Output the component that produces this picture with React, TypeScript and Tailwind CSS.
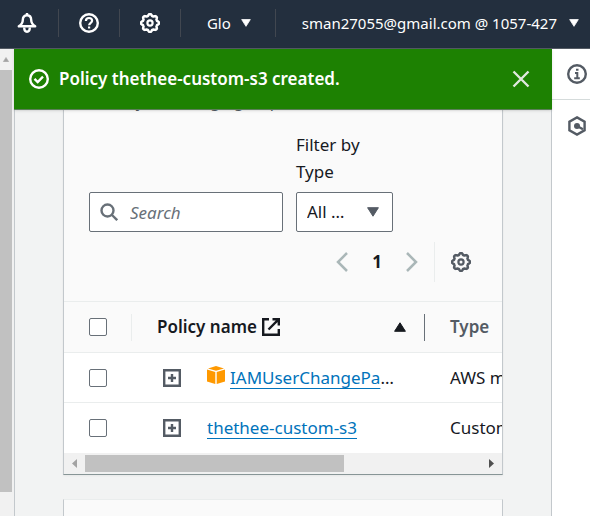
import React from "react";

const gearPoints = (r1: number, r2: number) => {
  const n = 64;
  const pts: string[] = [];
  for (let i = 0; i < n; i++) {
    const a = (i / n) * Math.PI * 2;
    const w = Math.max(-1, Math.min(1, Math.cos(a * 8) * 1.6));
    const r = (r1 + r2) / 2 + ((r2 - r1) / 2) * w;
    pts.push(`${(10 + r * Math.cos(a)).toFixed(2)},${(10 + r * Math.sin(a)).toFixed(2)}`);
  }
  return pts.join(" ");
};

function Gear() {
  return (
    <svg viewBox="0 0 20 20" className="size-5" fill="none" stroke="currentColor" strokeWidth="2.5" aria-hidden="true">
      <polygon points={gearPoints(7.3, 8.9)} strokeLinejoin="round" />
      <circle cx="10" cy="10" r="2.6" strokeWidth="2.2" />
    </svg>
  );
}

function Bell() {
  return (
    <svg viewBox="0 0 20 20" className="size-5" fill="none" stroke="currentColor" strokeWidth="2.4" strokeLinejoin="round" aria-hidden="true">
      <path d="M10 2.2C7.200 2.200 5.800 4.200 5.800 7c0 2.800-.8 4.300-4 6.300h16.400c-3.200-2-4-3.500-4-6.300 0-2.800-1.400-4.800-4.200-4.800z" />
      <path d="M10 0v2.500M7.200 14.500c0 2.700 1.100 4.200 2.800 4.200s2.800-1.500 2.800-4.200" />
    </svg>
  );
}

function Help() {
  return (
    <svg viewBox="0 0 20 20" className="size-5" fill="none" stroke="currentColor" strokeWidth="2.4" aria-hidden="true">
      <circle cx="10" cy="10" r="8.800" />
      <path d="M6.900 8c0-1.900 1.300-3 3.100-3s3.100 1.100 3.100 2.700c0 2-3 2.200-3 4.600" strokeWidth="2.2" />
      <path d="M9 13.500h2.200v2H9z" fill="currentColor" stroke="none" />
    </svg>
  );
}

function Triangle({ className, up }: { className: string; up?: boolean }) {
  return (
    <svg viewBox="0 0 12 10" className={className} fill="currentColor" stroke="currentColor" strokeLinejoin="round" aria-hidden="true">
      <path d={up ? "M6 .8 11.400 9.300H.6z" : "M6 9.200.6.7h10.800z"} />
    </svg>
  );
}

function Plus() {
  return (
    <svg viewBox="0 0 18 18" className="size-[18px]" fill="none" stroke="currentColor" strokeWidth="2.4" aria-hidden="true">
      <path d="M1.200 1.200h15.600v15.600H1.200zM9 5v8M5 9h8" />
    </svg>
  );
}

function Cube() {
  return (
    <svg viewBox="0 0 18 18" className="inline-block size-[18px] align-baseline" fill="#ff9900" aria-hidden="true">
      <path d="M9 0 17 2.400 9 4.700 1 2.400zM0 3.600l8.300 2.300V18L0 15.600zM18 3.600 9.700 5.900V18l8.300-2.400z" />
    </svg>
  );
}

function Check({ label }: { label: string }) {
  return (
    <input
      type="checkbox"
      aria-label={label}
      className="block size-[18px] appearance-none rounded-xs border border-[#687078] bg-white checked:bg-[#0073bb]"
    />
  );
}

function Divider() {
  return <span className="h-7 w-px bg-[#414750]" />;
}

const policies = [
  { name: "IAMUserChangePassword", type: "AWS managed", aws: true },
  { name: "thethee-custom-s3", type: "Customer managed", aws: false },
];

export default function App() {
  return (
    <div className="flex h-screen flex-col overflow-hidden bg-white font-['Noto_Sans','Open_Sans',sans-serif] text-base text-[#16191f]">
      <header className="flex h-[49px] shrink-0 items-center justify-end border-b border-[#545b64] bg-[#232f3e] pr-[11px] pb-0.5 text-white">
        <button aria-label="Notifications" className="mr-[21px]"><Bell /></button>
        <Divider />
        <button aria-label="Help" className="mx-5"><Help /></button>
        <Divider />
        <button aria-label="Settings" className="mx-5"><Gear /></button>
        <Divider />
        <button className="mr-6 ml-[26px] flex items-center gap-2.5 text-[15px]">
          Glo <Triangle className="h-2 w-2.5" />
        </button>
        <Divider />
        <button className="ml-[26px] flex items-center gap-3 text-[15px] whitespace-nowrap">
          sman27055@gmail.com @ 1057-427 <Triangle className="h-2 w-2.5" />
        </button>
      </header>

      <div className="flex min-h-0 flex-1">
        <div className="flex w-3.5 shrink-0 flex-col bg-[#f1f1f1] pb-6">
          <Triangle up className="mx-0.5 my-2 h-[5px] w-2 text-[#a3a3a3]" />
          <div className="w-3 flex-1 bg-[#c1c1c1]" />
        </div>

        <main className="relative min-w-0 flex-1 border-x border-[#c3c8cc] bg-[#f2f3f3] px-12">
          <div role="status" className="absolute -inset-x-px top-0 z-10 flex h-[61px] items-center border-b border-[#5b7f5a] bg-[#1d8102] pr-[22px] pl-[15px] text-white shadow-sm">
            <svg viewBox="0 0 20 20" className="mr-2.5 size-5" fill="none" stroke="currentColor" strokeWidth="2.4" aria-hidden="true">
              <circle cx="10" cy="10" r="8.800" />
              <path d="m5.500 9.800 3.200 3.200 5.300-5.300" />
            </svg>
            <span className="flex-1 text-[17px] font-semibold">Policy thethee-custom-s3 created.</span>
            <button aria-label="Dismiss" className="text-[#e0e8de]">
              <svg viewBox="0 0 18 18" className="size-[18px]" fill="none" stroke="currentColor" strokeWidth="2.400" aria-hidden="true">
                <path d="m1.500 1.500 15 15m0-15-15 15" />
              </svg>
            </button>
          </div>

          <section className="border-x border-b border-[#c3c8cc] border-b-[#879596] bg-[#fafafa] shadow-xs">
            <p className="px-[25px] pt-10 text-[#545b64]">directly or through groups.</p>
            <div className="flex items-end gap-[13px] px-[25px] pt-[18px]">
              <div className="relative w-[194px]">
                <svg viewBox="0 0 18 18" className="absolute top-[11px] left-[11px] size-[18px] text-[#687078]" fill="none" stroke="currentColor" strokeWidth="2.400" aria-hidden="true">
                  <circle cx="7.500" cy="7.500" r="6" />
                  <path d="m12 12 5.200 5.200" />
                </svg>
                <input type="search" aria-label="Search" placeholder="Search" className="block h-10 w-full rounded-xs border border-[#687078] bg-white pl-10 text-[17px] placeholder:text-[#687078] placeholder:italic" />
              </div>
              <div className="w-[97px]">
                <label htmlFor="type" className="mb-[7px] block text-[17px] leading-[27px]">Filter by Type</label>
                <div className="relative">
                  <select id="type" className="block h-10 w-full appearance-none truncate rounded-xs border border-[#687078] bg-white pr-11 pl-2.5 text-[17px]">
                    <option>All types</option>
                  </select>
                  <Triangle className="pointer-events-none absolute top-[15px] right-3.5 h-2.5 w-3 text-[#545b64]" />
                </div>
              </div>
            </div>
            <div className="flex h-[69px] items-center justify-end pr-[31px] pb-2.5">
              <button aria-label="Previous page" className="text-[#aab7b8]">
                <svg viewBox="0 0 12 20" className="h-5 w-3" fill="none" stroke="currentColor" strokeWidth="2.500"><path d="M11 1 2 10l9 9" /></svg>
              </button>
              <button className="mx-6 text-[17px] font-bold">1</button>
              <button aria-label="Next page" className="mr-4 text-[#aab7b8]">
                <svg viewBox="0 0 12 20" className="h-5 w-3" fill="none" stroke="currentColor" strokeWidth="2.500"><path d="m1 1 9 9-9 9" /></svg>
              </button>
              <span className="mr-4 h-10 w-px bg-[#eaeded]" />
              <button aria-label="Preferences" className="text-[#545b64]"><Gear /></button>
            </div>

            <div className="overflow-hidden">
              <table className="w-[720px] table-fixed border-collapse text-left text-[17px]">
                <colgroup>
                  <col className="w-[67px]" />
                  <col className="w-[294px]" />
                  <col />
                </colgroup>
                <thead>
                  <tr className="h-[51px] border-y border-[#eaeded]">
                    <th className="p-0 pl-[25px]"><Check label="Select all policies" /></th>
                    <th className="p-0 font-semibold">
                      <div className="flex h-[27px] items-center border-x border-l-[#eaeded] border-r-[#687078] pr-[18px] pl-[25px]">
                        Policy name
                        <svg viewBox="0 0 18 18" className="ml-[5px] size-[18px]" fill="none" stroke="currentColor" strokeWidth="2.4" aria-hidden="true">
                          <path d="M7 1.200H1.200v15.600h15.600V11M10.500 1.200h6.300v6.300M16.800 1.200 6.500 11.500" />
                        </svg>
                        <Triangle up className="ml-auto h-2.5 w-3" />
                      </div>
                    </th>
                    <th className="p-0 pl-[25px] font-semibold text-[#545b64]">Type</th>
                  </tr>
                </thead>
                <tbody className="bg-white">
                  {policies.map((p) => (
                    <tr key={p.name} className="h-[50px] border-b border-[#eaeded] last:border-b-0">
                      <td className="p-0 pl-[25px]"><Check label={`Select ${p.name}`} /></td>
                      <td className="p-0 pr-[30px] pl-8">
                        <div className="flex items-center">
                          <button aria-label={`Expand ${p.name}`} className="mr-[26px] text-[#545b64]"><Plus /></button>
                          <div className="min-w-0 flex-1 truncate">
                            {p.aws && <span className="mr-[5px] inline-block"><Cube /></span>}
                            <a href="#policy" className="text-[#0073bb] underline decoration-1 underline-offset-4 [text-decoration-skip-ink:none]">{p.name}</a>
                          </div>
                        </div>
                      </td>
                      <td className="p-0 pl-[25px]">{p.type}</td>
                    </tr>
                  ))}
                </tbody>
              </table>
              <div className="flex h-[21px] items-center bg-[#f1f1f1] px-2">
                <svg viewBox="0 0 5 9" className="mr-2 h-[9px] w-[5px]" fill="#a3a3a3"><path d="M5 0v9L0 4.500z" /></svg>
                <div className="flex-1"><div className="h-[17px] w-[64%] bg-[#c1c1c1]" /></div>
                <svg viewBox="0 0 5 9" className="h-[9px] w-[5px]" fill="#505050"><path d="M0 0v9l5-4.500z" /></svg>
              </div>
            </div>
          </section>
          <section className="mt-6 h-40 border border-[#c3c8cc] border-t-[#eaeded] bg-[#fafafa]" />
        </main>

        <aside className="w-[38px] shrink-0 bg-white text-[#545b64]">
          <button aria-label="Info" className="flex h-[51px] w-full items-center justify-center border-b border-[#d5dbdb] pl-3">
            <svg viewBox="0 0 20 20" className="size-5 shrink-0" fill="none" stroke="currentColor" strokeWidth="2.4" aria-hidden="true">
              <circle cx="10" cy="10" r="8.800" />
              <path d="M8 9h2.300v5M7.200 14.300h5.600M9 5.800h2.500" strokeWidth="2" />
            </svg>
          </button>
          <button aria-label="Tools" className="flex h-[51px] w-full items-center justify-center pl-3">
            <svg viewBox="0 0 20 20" className="size-5 shrink-0" fill="none" stroke="currentColor" strokeWidth="2.4" aria-hidden="true">
              <path d="m10 1.400 7.600 4.300v8.600L10 18.600l-7.600-4.300V5.700z" />
              <circle cx="10" cy="10" r="3" fill="currentColor" stroke="none" />
              <path d="m10 10 6 3.300" />
            </svg>
          </button>
        </aside>
      </div>
    </div>
  );
}
